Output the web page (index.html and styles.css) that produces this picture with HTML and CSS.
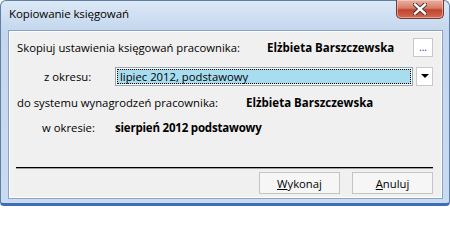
FILE: index.html
```
<!DOCTYPE html>
<html lang="pl">
<head>
<meta charset="utf-8">
<link rel="stylesheet" href="styles.css">
</head>
<body>
<div class="window">
  <div class="titlebar">
    <span class="title">Kopiowanie księgowań</span>
    <div class="close">
      <svg width="14" height="12" viewBox="0 0 14 12"><path d="M2 1.5 L12 10.5 M12 1.5 L2 10.5" stroke="#3a2a2a" stroke-width="4.2" stroke-linecap="square"/><path d="M2 1.5 L12 10.5 M12 1.5 L2 10.5" stroke="#ffffff" stroke-width="2.4" stroke-linecap="square"/></svg>
    </div>
  </div>
  <div class="client">
    <div class="row row1">
      <span class="label lbl1">Skopiuj ustawienia księgowań pracownika:</span>
      <span class="bold">Elżbieta Barszczewska</span>
      <span class="dots">...</span>
    </div>
    <div class="row row2">
      <span class="label lbl-okresu">z okresu:</span>
      <div class="combo"><span class="combo-text">lipiec 2012, podstawowy</span></div>
      <div class="drop"><svg width="8" height="4" viewBox="0 0 8 4"><path d="M0 0 H8 L4 4 Z" fill="#000"/></svg></div>
    </div>
    <div class="row row3">
      <span class="label lbl3">do systemu wynagrodzeń pracownika:</span>
      <span class="bold">Elżbieta Barszczewska</span>
    </div>
    <div class="row row4">
      <span class="label lbl-okresie">w okresie:</span>
      <span class="bold val4">sierpień 2012 podstawowy</span>
    </div>
    <div class="sep"></div>
    <div class="buttons">
      <span class="btn"><u>W</u>ykonaj</span>
      <span class="btn"><u>A</u>nuluj</span>
    </div>
  </div>
</div>
</body>
</html>
```
FILE: styles.css
```
html, body { margin: 0; padding: 0; background: #fff; }
body { width: 450px; height: 206px; overflow: hidden; font-family: "Open Sans", "Noto Sans", sans-serif; font-size: 11.3px; color: #000; white-space: nowrap; }

.window {
  box-sizing: border-box;
  width: 450px; height: 206px;
  border: 1px solid #5f7fa6;
  border-bottom: 3px solid #3f6cb8;
  border-radius: 6px 6px 4px 4px;
  background: linear-gradient(#dce8f6, #c4d7ee 30px, #c9dbf0);
  display: flex; flex-direction: column;
}
.titlebar { height: 29px; flex-shrink: 0; display: flex; align-items: flex-start; justify-content: space-between; }
.title { margin: 5px 0 0 8px; font-size: 11.5px; letter-spacing: -0.1px; color: #000; }
.close {
  width: 46px; height: 18px; margin: -1px 5px 0 0;
  border: 1px solid #6e3a3a; border-top: none;
  border-radius: 0 0 5px 5px;
  background: linear-gradient(#eab0a2, #d77c68 45%, #c3442f 55%, #d26a52);
  display: flex; align-items: center; justify-content: center;
  box-shadow: inset 0 0 0 1px rgba(255,220,210,0.5);
}
.client {
  flex: 1;
  margin: 0 6px 4px 7px;
  border: 1px solid #8aa3c2;
  box-shadow: inset 0 0 0 1px #fff;
  background: #f0f0f0;
  padding: 6px 9px 0 8px;
  display: flex; flex-direction: column;
}
.row { display: flex; align-items: center; height: 20px; flex-shrink: 0; }
.row > * { flex-shrink: 0; }
.bold { font-weight: bold; font-size: 11.5px; }
.lbl1 { width: 250px; }
.lbl3 { width: 229px; }
.dots {
  margin-left: auto;
  width: 20px; height: 19px; box-sizing: border-box;
  border: 1px solid #c9c9c9; background: #fff;
  color: #1a3fb0; font-size: 10px; line-height: 10px;
  display: flex; align-items: center; justify-content: center;
}
.row2 { margin-top: 9px; }
.lbl-okresu { margin-left: 27px; width: 71px; }
.combo {
  width: 298px; height: 19px; box-sizing: border-box;
  border: 1px solid #9aa4ae; padding: 1px;
  background: #fff;
}
.combo-text {
  display: block; height: 15px; box-sizing: border-box;
  background: #a8dcef; border: 1px dotted #000;
  padding-left: 2px; line-height: 13px;
}
.drop {
  margin-left: auto; width: 17px; height: 19px; box-sizing: border-box;
  border: 1px solid #c9c9c9; background: #fff;
  display: flex; align-items: center; justify-content: center;
}
.row3 { margin-top: 6px; }
.row4 { margin-top: 5px; }
.lbl-okresie { margin-left: 25px; width: 73px; }
.val4 { letter-spacing: -0.2px; }
.sep { margin: 30px 0 0 -1px; height: 1px; flex-shrink: 0; background: #000; border-bottom: 1px solid #a0a0a0; }
.buttons { display: flex; justify-content: flex-end; gap: 12px; margin-top: 3px; }
.btn {
  width: 81px; height: 22px; box-sizing: border-box;
  border: 1px solid #c4c4c4; background: #f6f6f6;
  display: flex; align-items: center; justify-content: center;
}
.btn u { text-decoration: underline; }
```
